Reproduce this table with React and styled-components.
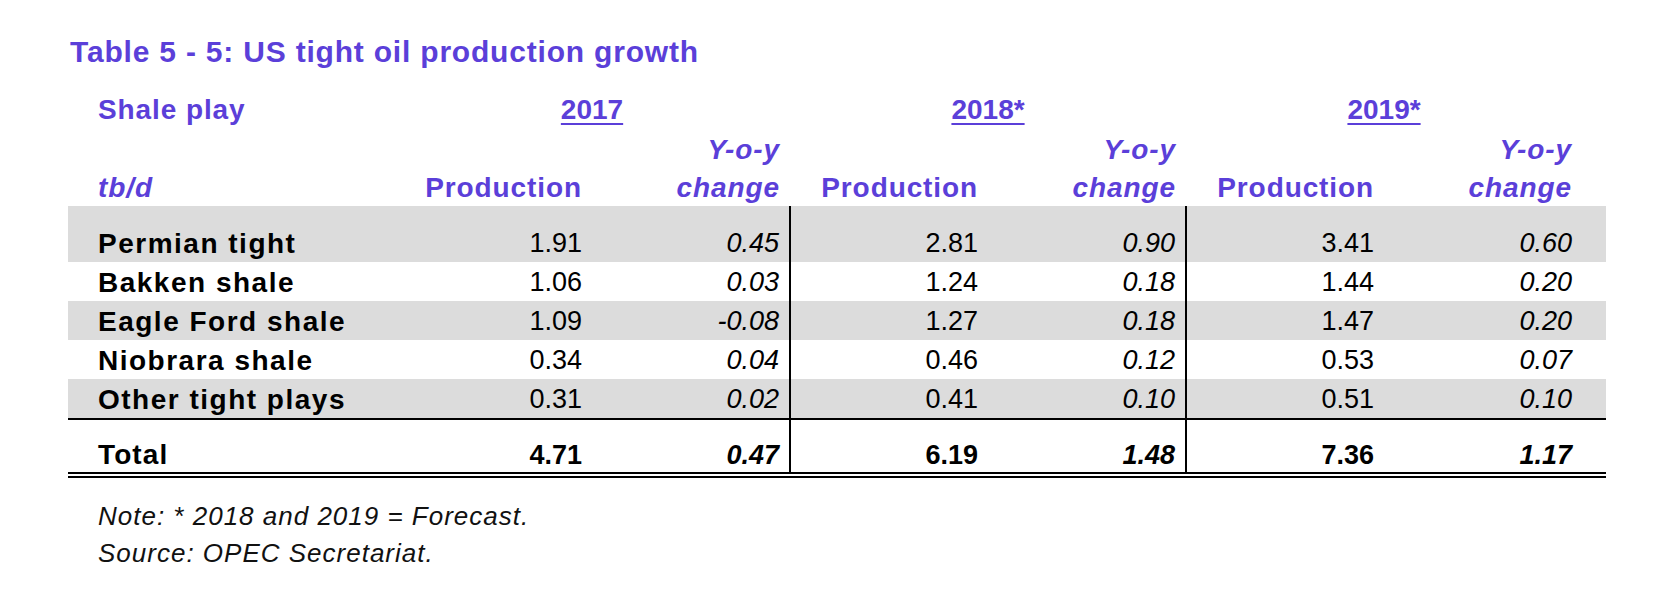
import React from 'react'
import styled, { createGlobalStyle } from 'styled-components'

const PURPLE = '#5b3fd9'
const SHADE = '#dcdcdc'

const GlobalStyle = createGlobalStyle`
  html, body {
    margin: 0;
    padding: 0;
    background: #fff;
  }

  body {
    font-family: 'Liberation Sans', Arial, sans-serif;
    color: #000;
  }
`

const years = ['2017', '2018*', '2019*']

const rows = [
  { name: 'Permian tight', values: ['1.91', '0.45', '2.81', '0.90', '3.41', '0.60'] },
  { name: 'Bakken shale', values: ['1.06', '0.03', '1.24', '0.18', '1.44', '0.20'] },
  { name: 'Eagle Ford shale', values: ['1.09', '-0.08', '1.27', '0.18', '1.47', '0.20'] },
  { name: 'Niobrara shale', values: ['0.34', '0.04', '0.46', '0.12', '0.53', '0.07'] },
  { name: 'Other tight plays', values: ['0.31', '0.02', '0.41', '0.10', '0.51', '0.10'] }
]

const total = ['4.71', '0.47', '6.19', '1.48', '7.36', '1.17']

function App() {
  return (
    <Page>
      <GlobalStyle />
      <Title>Table 5 - 5: US tight oil production growth</Title>

      <Table>
        <colgroup>
          <col style={{ width: 326 }} />
          {[0, 1, 2, 3, 4, 5].map(i => <col key={i} style={{ width: 198 }} />)}
          <col style={{ width: 24 }} />
        </colgroup>

        <thead>
          <tr>
            <HeadLabel>Shale play</HeadLabel>
            {years.map(y => (
              <YearCell key={y} colSpan={2}>
                <span>{y}</span>
              </YearCell>
            ))}
            <HeadCell />
          </tr>
          <tr>
            <HeadLabel />
            {years.map(y => (
              <React.Fragment key={y}>
                <HeadCell />
                <HeadCell $italic>Y-o-y</HeadCell>
              </React.Fragment>
            ))}
            <HeadCell />
          </tr>
          <tr>
            <HeadLabel $italic $last>tb/d</HeadLabel>
            {years.map(y => (
              <React.Fragment key={y}>
                <HeadCell $last>Production</HeadCell>
                <HeadCell $italic $last>change</HeadCell>
              </React.Fragment>
            ))}
            <HeadCell $last />
          </tr>
        </thead>

        <tbody>
          <Row $shade>
            <Spacer />
            {[0, 1, 2, 3, 4, 5].map(i => <Spacer key={i} $divider={i === 1 || i === 3} />)}
            <Spacer />
          </Row>

          {rows.map((row, r) => (
            <Row key={row.name} $shade={r % 2 === 0}>
              <Label>{row.name}</Label>
              {row.values.map((v, i) => (
                <Num key={i} $italic={i % 2 === 1} $divider={i === 1 || i === 3}>
                  {v}
                </Num>
              ))}
              <Num />
            </Row>
          ))}

          <Row>
            <Label $total>Total</Label>
            {total.map((v, i) => (
              <Num key={i} $total $italic={i % 2 === 1} $divider={i === 1 || i === 3}>
                {v}
              </Num>
            ))}
            <Num $total />
          </Row>
        </tbody>
      </Table>

      <Notes>
        <NoteLine>Note: * 2018 and 2019 = Forecast.</NoteLine>
        <NoteLine>Source: OPEC Secretariat.</NoteLine>
      </Notes>
    </Page>
  )
}

const Page = styled.div`
  padding: 34px 0 0 68px;
`

const Title = styled.h1`
  margin: 0 0 20px 2px;

  font-size: 30px;
  line-height: 36px;
  font-weight: 700;
  letter-spacing: 0.8px;
  color: ${PURPLE};
`

const Table = styled.table`
  border-collapse: collapse;
  table-layout: fixed;
  width: 1538px;
`

const HeadCell = styled.th`
  padding: 0 10px 0 0;

  font-size: 28px;
  line-height: ${props => (props.$last ? '36px' : '40px')};
  font-weight: 700;
  font-style: ${props => (props.$italic ? 'italic' : 'normal')};
  letter-spacing: 0.9px;
  text-align: right;
  white-space: nowrap;
  color: ${PURPLE};
`

const HeadLabel = styled(HeadCell)`
  padding: 0 0 0 30px;
  text-align: left;
`

const YearCell = styled(HeadCell)`
  padding: 0;
  text-align: center;

  span {
    text-decoration: underline;
    text-decoration-thickness: 2px;
    text-underline-offset: 4px;
    letter-spacing: 0;
  }
`

const Row = styled.tr`
  background: ${props => (props.$shade ? SHADE : 'transparent')};
`

const Spacer = styled.td`
  height: 17px;
  padding: 0;
  border-right: ${props => (props.$divider ? '2px solid #000' : 'none')};
`

const Label = styled.td`
  padding: ${props => (props.$total ? '18px 0 0 30px' : '2px 0 0 30px')};

  font-size: 28px;
  line-height: ${props => (props.$total ? '34px' : '37px')};
  font-weight: 700;
  letter-spacing: ${props => (props.$total ? '1.1px' : '1.5px')};
  white-space: nowrap;

  ${props => props.$total && 'border-top: 2px solid #000; border-bottom: 6px double #000;'}
`

const Num = styled.td`
  padding: ${props => (props.$total ? '18px 10px 0 0' : '2px 10px 0 0')};

  font-size: 27px;
  line-height: ${props => (props.$total ? '34px' : '37px')};
  font-weight: ${props => (props.$total ? 700 : 400)};
  font-style: ${props => (props.$italic ? 'italic' : 'normal')};
  text-align: right;
  white-space: nowrap;

  border-right: ${props => (props.$divider ? '2px solid #000' : 'none')};
  ${props => props.$total && 'border-top: 2px solid #000; border-bottom: 6px double #000;'}
`

const Notes = styled.div`
  margin-top: 20px;
  padding-left: 30px;
`

const NoteLine = styled.p`
  margin: 0;

  font-size: 26px;
  line-height: 37px;
  font-style: italic;
  letter-spacing: 1px;
  color: #111;
`

export default App
